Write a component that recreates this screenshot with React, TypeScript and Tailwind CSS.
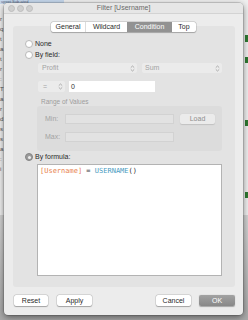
import React from "react";

function UpDown({ color = "#9a9a9a" }: { color?: string }) {
  return (
    <svg width="5" height="7" viewBox="0 0 5 7" className="shrink-0">
      <path d="M0.8 2.6 L2.5 1 L4.2 2.6" fill="none" stroke={color} strokeWidth="0.8" />
      <path d="M0.8 4.4 L2.5 6 L4.2 4.4" fill="none" stroke={color} strokeWidth="0.8" />
    </svg>
  );
}

function Radio({ selected = false }: { selected?: boolean }) {
  if (selected) {
    return (
      <div className="w-[8px] h-[8px] rounded-full bg-[#9b9b9b] border border-[#858585] flex items-center justify-center shrink-0">
        <div className="w-[3px] h-[3px] rounded-full bg-[#ececec]" />
      </div>
    );
  }
  return <div className="w-[8px] h-[8px] rounded-full bg-white border border-[#b9b9b9] shrink-0" />;
}

export default function App() {
  return (
    <div className="relative w-[248px] h-[320px] overflow-hidden bg-[#f0f0f0] font-['Liberation_Sans',Arial,sans-serif] text-[7px] leading-[8px] text-[#2a2a2a]">
      {/* background app */}
      <div className="absolute left-0 top-0 w-[64px] h-[4px] bg-[#c7d9ee] flex items-center">
        <div className="pl-[1px] text-[#5a6a86] text-[4px] leading-[4px] whitespace-nowrap">uppet Sub-ated</div>
      </div>
      <div className="absolute left-0 top-[14px] w-[5px] flex flex-col text-[#555] text-[6px] leading-[10px]">
        <span>r</span>
        <span>q</span>
        <span>t</span>
        <span>a</span>
        <span>t</span>
        <span>r</span>
        <span>:</span>
        <span>T</span>
        <span>a</span>
        <span>r</span>
        <span>d</span>
        <span>s</span>
        <span>s</span>
        <span>a</span>
        <span>:</span>
        <span>i</span>
      </div>
      <div className="absolute left-0 top-[215px] w-[248px] h-[105px] bg-gradient-to-b from-[#d4d4d4] to-[#a9a9a9]" />
      <div className="absolute right-0 top-[35px] w-[3px] h-[7px] bg-[#2f7a32]" />
      <div className="absolute right-0 top-[57px] w-[3px] h-[6px] bg-[#2f7a32]" />
      <div className="absolute right-0 top-[120px] w-[3px] h-[6px] bg-[#2f7a32]" />
      <div className="absolute right-0 top-[192px] w-[3px] h-[6px] bg-[#2f7a32]" />

      {/* window */}
      <div className="relative pt-[3px] pl-[4px]">
        <div className="w-[239px] h-[312px] bg-[#ececec] rounded-[4px] shadow-[0_2px_7px_rgba(0,0,0,0.5),0_0_0_0.5px_rgba(0,0,0,0.25)] flex flex-col overflow-hidden">
          {/* title bar */}
          <div className="relative h-[11px] bg-[#e6e6e6] border-b border-[#d3d3d3] flex items-center justify-center shrink-0">
            <div className="absolute left-[4px] top-[1.5px] flex gap-[2px]">
              <div className="w-[7px] h-[7px] rounded-full bg-[#cfcfcf] border border-[#bdbdbd]" />
              <div className="w-[7px] h-[7px] rounded-full bg-[#cfcfcf] border border-[#bdbdbd]" />
              <div className="w-[7px] h-[7px] rounded-full bg-[#cfcfcf] border border-[#bdbdbd]" />
            </div>
            <span className="text-[#6a6a6a]">Filter [Username]</span>
          </div>

          {/* tabs */}
          <div className="relative z-10 mt-[8px] flex justify-center">
            <div className="flex h-[10px] bg-white rounded-[2px] shadow-[0_0_0_0.5px_rgba(0,0,0,0.18),0_0.5px_1px_rgba(0,0,0,0.2)] overflow-hidden">
              <div className="w-[35px] flex items-center justify-center border-r border-[#dcdcdc]">General</div>
              <div className="w-[41px] flex items-center justify-center">Wildcard</div>
              <div className="w-[45px] flex items-center justify-center bg-[#929292] text-white">Condition</div>
              <div className="w-[24px] flex items-center justify-center">Top</div>
            </div>
          </div>

          {/* panel */}
          <div className="-mt-[6px] ml-[9px] w-[222px] h-[261px] bg-[#e3e3e3] rounded-[3px] flex flex-col pl-[12px] pt-[13px] shrink-0">
            <div className="h-[10px] flex items-center gap-[2px]">
              <Radio />
              <span>None</span>
            </div>
            <div className="mt-[1px] h-[10px] flex items-center gap-[2px]">
              <Radio />
              <span>By field:</span>
            </div>
            <div className="mt-[3px] ml-[13px] flex gap-[5px]">
              <div className="w-[99px] h-[10px] bg-[#ebebeb] rounded-[2px] flex items-center justify-between pl-[4px] pr-[2px] text-[#a3a3a3]">
                <span>Profit</span>
                <UpDown />
              </div>
              <div className="w-[80px] h-[10px] bg-[#ebebeb] rounded-[2px] flex items-center justify-between pl-[3px] pr-[2px] text-[#a3a3a3]">
                <span>Sum</span>
                <UpDown />
              </div>
            </div>
            <div className="mt-[8px] ml-[13px] flex gap-[4px]">
              <div className="w-[27px] h-[11px] bg-[#ebebeb] rounded-[2px] flex items-center justify-between pl-[5px] pr-[2px] text-[#a3a3a3]">
                <span>=</span>
                <UpDown />
              </div>
              <div className="w-[86px] h-[11px] bg-white flex items-center pl-[2px] text-[#333]">0</div>
            </div>
            <div className="mt-[6px] ml-[16px] h-[8px] text-[6.5px] text-[#9c9c9c]">Range of Values</div>
            <div className="ml-[12px] w-[185px] h-[45px] bg-[#dcdcdc] rounded-[3px] flex flex-col pt-[8px]">
              <div className="flex items-center h-[10px]">
                <span className="w-[28px] pl-[8px] text-[#a3a3a3]">Min:</span>
                <div className="w-[109px] h-[10px] bg-[#e2e2e2] border border-[#d2d2d2]" />
                <div className="ml-[6px] w-[35px] h-[10px] bg-[#ebebeb] rounded-[2px] shadow-[0_0.5px_1px_rgba(0,0,0,0.12)] flex items-center justify-center text-[#8e8e8e]">Load</div>
              </div>
              <div className="mt-[8px] flex items-center h-[10px]">
                <span className="w-[28px] pl-[8px] text-[#a3a3a3]">Max:</span>
                <div className="w-[109px] h-[10px] bg-[#e2e2e2] border border-[#d2d2d2]" />
              </div>
            </div>
            <div className="mt-[1px] h-[10px] flex items-center gap-[2px]">
              <Radio selected />
              <span>By formula:</span>
            </div>
            <div className="mt-[2px] ml-[12px] w-[185px] h-[112px] bg-white border border-[#b3b3b3] pl-[2px] pt-[2px]">
              <div className="font-['DejaVu_Sans_Mono',monospace] text-[7px] leading-[8px] whitespace-pre">
                <span className="text-[#e8824c]">[Username]</span>
                <span className="text-[#444]"> = </span>
                <span className="text-[#4a9cbf]">USERNAME</span>
                <span className="text-[#333]">()</span>
              </div>
            </div>
          </div>

          {/* buttons */}
          <div className="mt-[8px] flex items-center pl-[10px] pr-[8px]">
            <div className="w-[34px] h-[11px] bg-white rounded-[2px] shadow-[0_0_0_0.5px_rgba(0,0,0,0.15),0_0.5px_1px_rgba(0,0,0,0.25)] flex items-center justify-center">Reset</div>
            <div className="ml-[9px] w-[35px] h-[11px] bg-white rounded-[2px] shadow-[0_0_0_0.5px_rgba(0,0,0,0.15),0_0.5px_1px_rgba(0,0,0,0.25)] flex items-center justify-center">Apply</div>
            <div className="ml-auto w-[35px] h-[11px] bg-white rounded-[2px] shadow-[0_0_0_0.5px_rgba(0,0,0,0.15),0_0.5px_1px_rgba(0,0,0,0.25)] flex items-center justify-center">Cancel</div>
            <div className="ml-[8px] w-[36px] h-[11px] bg-gradient-to-b from-[#a2a2a2] to-[#888888] rounded-[2px] shadow-[0_0.5px_1px_rgba(0,0,0,0.3)] flex items-center justify-center text-white">OK</div>
          </div>
        </div>
      </div>
    </div>
  );
}
